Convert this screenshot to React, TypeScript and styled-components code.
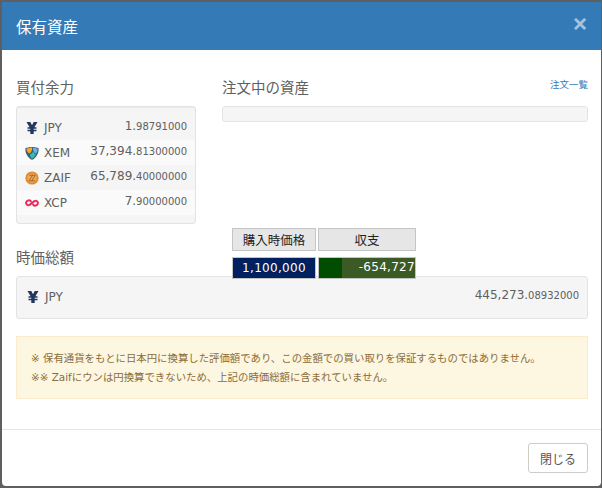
import React from 'react';
import styled, { createGlobalStyle } from 'styled-components';

const GlobalStyle = createGlobalStyle`
  html, body {
    margin: 0;
    padding: 0;
    background: #5f5f5f;
  }
  * {
    box-sizing: border-box;
  }
`;

const balances = [
  { code: 'JPY', whole: '1.', decimal: '98791000' },
  { code: 'XEM', whole: '37,394.', decimal: '81300000' },
  { code: 'ZAIF', whole: '65,789.', decimal: '40000000' },
  { code: 'XCP', whole: '7.', decimal: '90000000' },
];

const YenIcon = () => (
  <svg width="14" height="14" viewBox="0 0 14 14">
    <path d="M1.500 1h3.800L7 4.200 8.700 1h3.800L9.400 6.200h2.100v1.500H8.700v1h2.800v1.500H8.700V13H5.300v-2.800H2.500V8.700h2.800v-1H2.500V6.200h2.100z" fill="#22375f" />
  </svg>
);

const XemIcon = () => (
  <svg width="14" height="14" viewBox="0 0 14 14">
    <path d="M0.300 2.400C3 .4 11 .4 13.700 2.400 13.900 7 11 12.200 7 13.800 3 12.200 .1 7 .3 2.400z" fill="#3d5a78" />
    <path d="M1.300 3C3 2 5.500 1.500 7 1.500 7.400 4 6.500 6.200 4.200 7.600 2.800 6.600 1.600 5 1.300 3z" fill="#f5a623" />
    <path d="M7.800 1.700c1.700 0 3.400.5 4.900 1.300 0 1.700-.6 3.300-1.500 4.600C9.600 7.400 8 5.400 7.800 1.700z" fill="#67b2e8" />
    <path d="M4.800 8.400c2-1 3-2 3.400-3 .6 1.600 1.600 2.600 2.600 3-1 2-2.400 3.500-3.800 4.300C5.800 11.800 5.200 10 4.800 8.400z" fill="#2fc0ad" />
  </svg>
);

const ZaifIcon = () => (
  <svg width="14" height="14" viewBox="0 0 14 14">
    <circle cx="7" cy="7" r="6.600" fill="#e08a2c" />
    <circle cx="7" cy="7" r="4.800" fill="#eda858" />
    <path d="M4.200 4.200h3.400L4 9.800h3.200M7.200 4.200h3L6.800 9.800h3.400" fill="none" stroke="#96672c" strokeWidth="0.900" />
  </svg>
);

const XcpIcon = () => (
  <svg width="14" height="14" viewBox="0 0 14 14">
    <path d="M5.800 5.200C4.600 3.900 1.900 4 1.200 6.200 .6 8.400 2.800 9.800 4.600 8.900L9.400 5.100C11.200 4.200 13.400 5.600 12.800 7.800 12.100 10 9.400 10.100 8.200 8.800" fill="none" stroke="#ee2a5d" strokeWidth="2" strokeLinecap="round" />
  </svg>
);

const icons: Record<string, React.ReactNode> = {
  JPY: <YenIcon />,
  XEM: <XemIcon />,
  ZAIF: <ZaifIcon />,
  XCP: <XcpIcon />,
};

const App = () => {
  return (
    <>
      <GlobalStyle />
      <Page>
        <Dialog>
          <Header>
            <Title>保有資産</Title>
            <CloseMark>×</CloseMark>
          </Header>
          <Body>
            <Columns>
              <div>
                <SectionTitle>買付余力</SectionTitle>
                <BalanceWell>
                  {balances.map((item, index) => (
                    <BalanceRow key={item.code} $striped={index % 2 === 1}>
                      <Currency>
                        <IconSlot>{icons[item.code]}</IconSlot>
                        {item.code}
                      </Currency>
                      <Amount>
                        {item.whole}
                        <Decimal>{item.decimal}</Decimal>
                      </Amount>
                    </BalanceRow>
                  ))}
                </BalanceWell>
              </div>
              <div>
                <OrderHead>
                  <SectionTitle>注文中の資産</SectionTitle>
                  <OrderLink>注文一覧</OrderLink>
                </OrderHead>
                <EmptyWell />
              </div>
            </Columns>
            <TotalTitle>時価総額</TotalTitle>
            <TotalWell>
              <TotalCurrency>
                <IconSlot>
                  <YenIcon />
                </IconSlot>
                JPY
              </TotalCurrency>
              <TotalAmount>
                445,273.<Decimal>08932000</Decimal>
              </TotalAmount>
            </TotalWell>
            <Notice>
              <NoticeLine>※ 保有通貨をもとに日本円に換算した評価額であり、この金額での買い取りを保証するものではありません。</NoticeLine>
              <NoticeLine>※※ Zaifにウンは円換算できないため、上記の時価総額に含まれていません。</NoticeLine>
            </Notice>
          </Body>
          <Footer>
            <CloseButton>閉じる</CloseButton>
          </Footer>
          <Ticker>
            <TickerHead>購入時価格</TickerHead>
            <TickerHead>収支</TickerHead>
            <PriceCell>1,100,000</PriceCell>
            <ProfitCell>
              <ProfitBar />
              <ProfitValue>-654,727</ProfitValue>
            </ProfitCell>
          </Ticker>
        </Dialog>
      </Page>
    </>
  );
};

export default App;

const Page = styled.div`
  width: 602px;
  height: 488px;
  padding: 2px 1px 2px 2px;
  font-family: 'DejaVu Sans', 'Noto Sans CJK JP', sans-serif;
  color: #555;
`;

const Dialog = styled.div`
  position: relative;
  height: 484px;
  background: #fff;
  border-radius: 0 0 4px 4px;
  display: flex;
  flex-direction: column;
  overflow: hidden;
`;

const Header = styled.div`
  height: 48px;
  flex-shrink: 0;
  background: #337ab7;
  padding: 0 14px;
  display: flex;
  justify-content: space-between;
  align-items: center;
`;

const Title = styled.div`
  font-size: 15.5px;
  color: #fff;
`;

const CloseMark = styled.div`
  font-family: 'Liberation Sans', sans-serif;
  font-size: 24px;
  font-weight: bold;
  line-height: 1;
  color: #fff;
  opacity: 0.55;
  margin-top: -5px;
`;

const Body = styled.div`
  flex: 1;
  padding: 28px 13px 0 14px;
`;

const Columns = styled.div`
  display: grid;
  grid-template-columns: 180px 366px;
  column-gap: 26px;
`;

const SectionTitle = styled.div`
  font-size: 14.5px;
  line-height: 20px;
  margin-bottom: 8px;
  color: #606060;
`;

const OrderHead = styled.div`
  display: flex;
  justify-content: space-between;
  align-items: flex-start;
`;

const OrderLink = styled.a`
  font-size: 9.5px;
  line-height: 14px;
  color: #337ab7;
`;

const BalanceWell = styled.div`
  height: 118px;
  padding-top: 8px;
  background: #f5f5f5;
  border: 1px solid #e3e3e3;
  border-radius: 3px;
  box-shadow: inset 0 1px 1px rgba(0, 0, 0, 0.05);
`;

const BalanceRow = styled.div<{ $striped: boolean }>`
  height: 25px;
  padding: 0 8px;
  display: flex;
  justify-content: space-between;
  align-items: center;
  background: ${(props) => (props.$striped ? '#fafafa' : '#f5f5f5')};
`;

const Currency = styled.div`
  display: flex;
  align-items: center;
  font-size: 12px;
  color: #606060;
`;

const TotalCurrency = styled(Currency)`
  margin-top: -1px;
`;

const IconSlot = styled.span`
  width: 19px;
  display: flex;
  align-items: center;
`;

const Amount = styled.div`
  font-size: 12px;
  color: #606060;
  margin-top: -4px;
`;

const Decimal = styled.span`
  font-size: 10px;
`;

const EmptyWell = styled.div`
  height: 16px;
  background: #f5f5f5;
  border: 1px solid #e3e3e3;
  border-radius: 3px;
`;

const TotalTitle = styled(SectionTitle)`
  margin-top: 24px;
`;

const TotalWell = styled.div`
  height: 43px;
  padding: 0 8px 0 9px;
  background: #f5f5f5;
  border: 1px solid #e3e3e3;
  border-radius: 3px;
  display: flex;
  justify-content: space-between;
  align-items: center;
`;

const TotalAmount = styled(Amount)`
  margin-top: -5px;
`;

const Notice = styled.div`
  margin-top: 17px;
  height: 63px;
  padding: 12px 14px;
  background: #fdf6e0;
  border: 1px solid #faebcc;
  color: #8a6d3b;
`;

const NoticeLine = styled.div`
  font-size: 10.4px;
  line-height: 19px;
  white-space: nowrap;
`;

const Footer = styled.div`
  height: 57px;
  flex-shrink: 0;
  padding: 13px 13px 0;
  border-top: 1px solid #e5e5e5;
  display: flex;
  justify-content: flex-end;
  align-items: flex-start;
`;

const CloseButton = styled.button`
  width: 60px;
  height: 30px;
  font-family: inherit;
  font-size: 12px;
  color: #555;
  background: #fff;
  border: 1px solid #ccc;
  border-radius: 3px;
`;

const Ticker = styled.div`
  position: absolute;
  left: 230px;
  top: 226px;
  display: grid;
  grid-template-columns: 84px 98px;
  grid-template-rows: 23px 22px;
  column-gap: 2px;
  row-gap: 6px;
  font-size: 12px;
`;

const TickerHead = styled.div`
  background: #e6e6e6;
  border: 1px solid #c4c4c4;
  color: #222;
  font-size: 12.5px;
  display: flex;
  justify-content: center;
  align-items: center;
`;

const PriceCell = styled.div`
  background: #00205f;
  border: 1px solid #c4c4c4;
  color: #fff;
  letter-spacing: 0.3px;
  display: flex;
  justify-content: center;
  align-items: center;
`;

const ProfitCell = styled.div`
  background: #3b5a26;
  border: 1px solid #c4c4c4;
  color: #fff;
  display: flex;
  align-items: stretch;
`;

const ProfitBar = styled.div`
  width: 23px;
  background: #004d00;
`;

const ProfitValue = styled.div`
  flex: 1;
  text-align: right;
  line-height: 19px;
  letter-spacing: 0.3px;
`;
